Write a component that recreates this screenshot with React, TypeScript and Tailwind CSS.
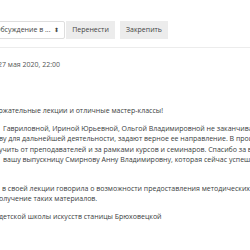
import React from "react";

const font = { fontFamily: '"Open Sans", "Noto Sans", sans-serif' };

function Line({ text, ml }: { text: string; ml: string }) {
  return <div className={`whitespace-nowrap h-[10.5px] leading-[10.5px] ${ml}`}>{text}</div>;
}

export default function App() {
  return (
    <div className="w-[250px] h-[250px] overflow-hidden bg-white text-[#3a3d40] text-[7px]" style={font}>
      <div className="flex items-start pt-[21px] h-[48px] border-b border-[#ececec]">
        <div className="-ml-[10px] h-[18px] w-[75px] shrink-0 border border-[#dedede] rounded-[2px] flex items-center justify-between pl-[4px] pr-[5px] text-[#444] bg-white">
          <span className="whitespace-nowrap">Обсуждение в ...</span>
          <span className="text-[6px] leading-none">⬍</span>
        </div>
        <div className="ml-[1px] h-[18px] w-[49px] shrink-0 bg-[#ececec] flex items-center justify-center text-[#444]">Перенести</div>
        <div className="ml-[5px] h-[18px] w-[48px] shrink-0 bg-[#ececec] flex items-center justify-center text-[#444]">Закрепить</div>
      </div>
      <div className="mt-[12px] -ml-[2px] h-[10.5px] leading-[10.5px] text-[#555] whitespace-nowrap">27 мая 2020, 22:00</div>
      <div className="mt-[35px]">
        <div className="mb-[7.5px]">
          <Line ml="-ml-[1.5px]" text="ржательные лекции и отличные мастер-классы!" />
        </div>
        <div className="mb-[7.5px]">
          <Line ml="ml-[3px]" text="Гавриловной, Ириной Юрьевной, Ольгой Владимировной не заканчивают" />
          <Line ml="-ml-[1px]" text="ву для дальнейшей деятельности, задают верное ее направление. В процессе" />
          <Line ml="-ml-[1px]" text="учить от преподавателей и за рамками курсов и семинаров. Спасибо за ваш" />
          <Line ml="ml-[3px]" text="вашу выпускницу Смирнову Анну Владимировну, которая сейчас успешно" />
          <Line ml="-ml-[60px]" text="работает." />
        </div>
        <div className="mb-[7.5px]">
          <Line ml="ml-[2px]" text="в своей лекции говорила о возможности предоставления методических" />
          <Line ml="-ml-[1px]" text="олучение таких материалов." />
        </div>
        <div>
          <Line ml="-ml-[1px]" text="детской школы искусств станицы Брюховецкой" />
        </div>
      </div>
    </div>
  );
}
